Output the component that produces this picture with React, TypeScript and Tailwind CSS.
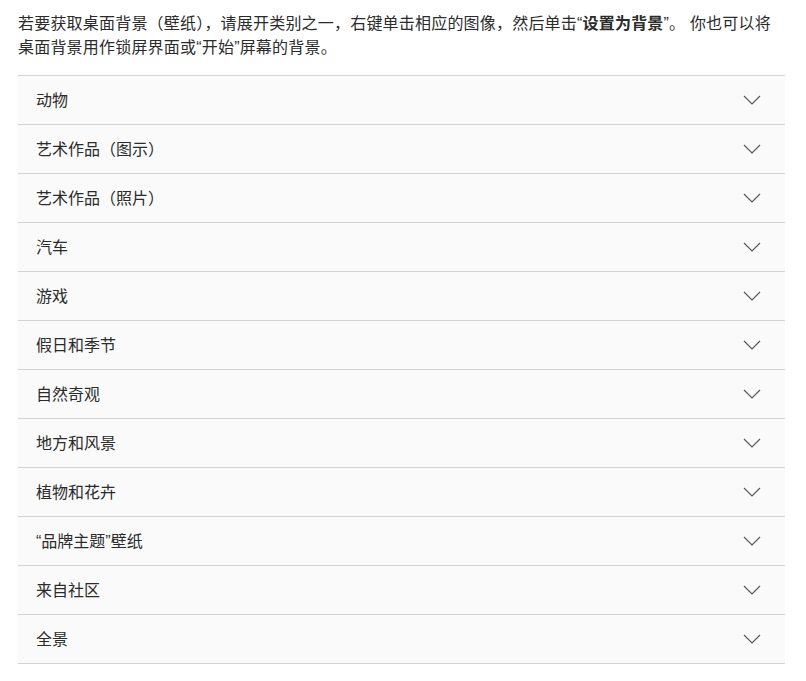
import React from 'react';

const categories = [
  '动物',
  '艺术作品（图示）',
  '艺术作品（照片）',
  '汽车',
  '游戏',
  '假日和季节',
  '自然奇观',
  '地方和风景',
  '植物和花卉',
  '“品牌主题”壁纸',
  '来自社区',
  '全景',
];

const Chevron = () => (
  <svg width="18" height="10" viewBox="0 0 18 10" fill="none" className="shrink-0">
    <path d="M1 1l8 8 8-8" stroke="#555" strokeWidth="1.1" />
  </svg>
);

export default function App() {
  return (
    <div
      className="bg-white text-[#2b2b2b] pl-[18px] pt-[12px] w-[806px] min-h-[681px]"
      style={{ fontFamily: '"Liberation Sans", "Noto Sans CJK SC", sans-serif' }}
    >
      <p className="w-[758px] text-[16px] leading-[24px] tracking-[0.2px]">
        若要获取桌面背景（壁纸），请展开类别之一，右键单击相应的图像，然后单击“<b className="font-bold">设置为背景</b>”。 你也可以将桌面背景用作锁屏界面或“开始”屏幕的背景。
      </p>
      <div className="mt-[15px] w-[767px] border-t border-[#d2d2d2]">
        {categories.map((c) => (
          <div
            key={c}
            className="flex items-center justify-between h-[49px] bg-[#fafafa] border-b border-[#d2d2d2] pl-[18px] pr-[24px]"
          >
            <span className="text-[16px] pt-[1px]">{c}</span>
            <Chevron />
          </div>
        ))}
      </div>
    </div>
  );
}
